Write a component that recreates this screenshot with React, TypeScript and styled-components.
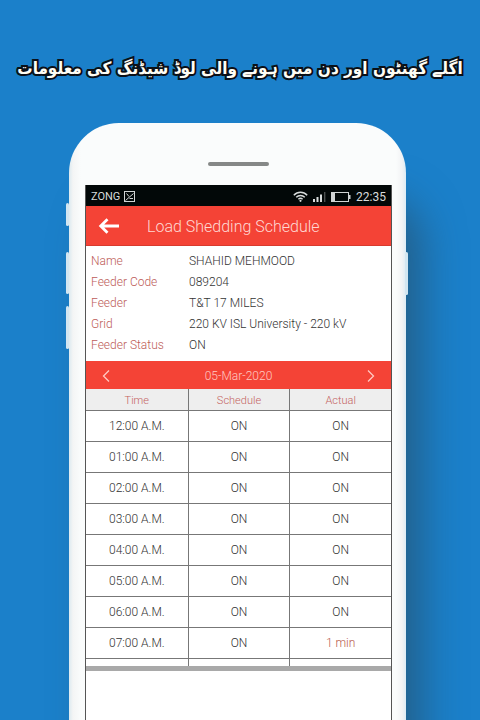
import React from "react";
import styled, { createGlobalStyle } from "styled-components";

const RED = "#f44336";

const GlobalStyle = createGlobalStyle`
  *, *::before, *::after { box-sizing: border-box; }
  body { margin: 0; background: #1b80ca; }
`;

const Page = styled.main`
  min-height: 100vh;
  display: flex;
  flex-direction: column;
  background: #1b80ca;
  overflow: hidden;
  font-family: Roboto, "Open Sans", sans-serif;
  font-weight: 300;
  color: #444;
`;

const Headline = styled.h1`
  margin: 0;
  padding: 48px 8px 0;
  height: 123px;
  text-align: center;
  white-space: nowrap;
  font-family: "DejaVu Sans Condensed", "DejaVu Sans", sans-serif;
  font-size: 17px;
  line-height: 40px;
  font-weight: 700;
  color: #fffdf5;
  -webkit-text-stroke: 4px #0a1018;
  paint-order: stroke fill;
`;

const Phone = styled.section`
  position: relative;
  flex: 1;
  display: flex;
  flex-direction: column;
  margin: 0 74px 0 69px;
  padding: 0 14px 0 16px;
  border-radius: 50px 50px 0 0;
  background: linear-gradient(90deg, #dceaf0, #f4f5f5 4px, #fafcfc 12px, #fafcfc calc(100% - 10px), #f2f3f5 calc(100% - 4px), #dcebf5);
  box-shadow: 20px 70px 40px -4px rgba(38, 84, 116, 0.75);
`;

const SideButton = styled.span<{ $side: "left" | "right"; $top: number; $height: number }>`
  position: absolute;
  ${(p) => p.$side}: ${(p) => (p.$side === "left" ? "-3px" : "-2px")};
  top: ${(p) => p.$top}px;
  width: 3px;
  height: ${(p) => p.$height}px;
  border-radius: 2px;
  background: #d3e6f1;
`;

const Earpiece = styled.div`
  height: 62px;
  display: flex;
  justify-content: center;
  padding-top: 39px;

  &::before {
    content: "";
    width: 61px;
    height: 4px;
    border-radius: 2px;
    background: #858887;
  }
`;

const Screen = styled.div`
  flex: 1;
  display: flex;
  flex-direction: column;
  border: solid #555;
  border-width: 0 1px;
  background: #fff;
`;

const StatusBar = styled.div`
  height: 21px;
  display: flex;
  align-items: center;
  gap: 4px;
  padding: 2px 5px 0;
  background: #020808;
  color: #d8dcdc;
  font-size: 12px;
  font-weight: 400;
`;

const Carrier = styled.span`
  font-size: 11px;
`;

const StatusIcons = styled.div`
  margin-left: auto;
  display: flex;
  align-items: center;
  gap: 5px;
`;

const AppBar = styled.header`
  height: 40px;
  display: flex;
  align-items: center;
  gap: 28px;
  padding: 0 12px;
  border-bottom: 1px solid #d83a2e;
  background: ${RED};
`;

const IconButton = styled.button`
  display: flex;
  align-items: center;
  justify-content: center;
  padding: 0;
  border: 0;
  background: transparent;
  color: inherit;
  cursor: pointer;
`;

const Title = styled.h2`
  margin: 0;
  padding-top: 2px;
  font-size: 16px;
  line-height: 24px;
  font-weight: 300;
  color: #ffd8d3;
`;

const Details = styled.dl`
  margin: 0;
  padding: 5px 5px 4px;
  display: grid;
  grid-template-columns: 98px 1fr;
  grid-auto-rows: 21px;
  align-content: start;
  height: 115px;
  font-size: 12px;
  line-height: 21px;
`;

const Term = styled.dt`
  color: #bd5c58;
`;

const Value = styled.dd`
  margin: 0;
  color: #333;
  white-space: nowrap;
`;

const DateBar = styled.nav`
  height: 28px;
  display: flex;
  align-items: center;
  justify-content: space-between;
  padding: 2px 14px 0;
  background: ${RED};
  color: #ffc9c2;
  font-size: 12px;
`;

const Schedule = styled.table`
  width: 100%;
  table-layout: fixed;
  border-collapse: separate;
  border-spacing: 0;
  border-bottom: 5px solid #a9a9a9;
  text-align: center;
`;

const HeadCell = styled.th`
  height: 22px;
  padding: 2px 0 0;
  border-bottom: 1px solid #777;
  background: #eee;
  color: #c4635e;
  font-size: 11px;
  line-height: 16px;
  font-weight: 300;

  & + & { border-left: 1px solid #777; }
`;

const Cell = styled.td<{ $alert?: boolean }>`
  height: 31px;
  padding: 0;
  border-bottom: 1px solid #777;
  color: ${(p) => (p.$alert ? "#b9604f" : "#333")};
  font-size: 12px;
  line-height: 16px;

  & + & { border-left: 1px solid #777; }
`;

const PeekCell = styled.td`
  height: 7px;
  padding: 0;

  & + & { border-left: 1px solid #777; }
`;

const details = [
  ["Name", "SHAHID MEHMOOD"],
  ["Feeder Code", "089204"],
  ["Feeder", "T&T 17 MILES"],
  ["Grid", "220 KV ISL University - 220 kV"],
  ["Feeder Status", "ON"],
];

const rows = [
  { time: "12:00 A.M.", schedule: "ON", actual: "ON" },
  { time: "01:00 A.M.", schedule: "ON", actual: "ON" },
  { time: "02:00 A.M.", schedule: "ON", actual: "ON" },
  { time: "03:00 A.M.", schedule: "ON", actual: "ON" },
  { time: "04:00 A.M.", schedule: "ON", actual: "ON" },
  { time: "05:00 A.M.", schedule: "ON", actual: "ON" },
  { time: "06:00 A.M.", schedule: "ON", actual: "ON" },
  { time: "07:00 A.M.", schedule: "ON", actual: "1 min" },
];

const PictureIcon = () => (
  <svg width="11" height="11" viewBox="0 0 11 11" fill="none" stroke="#d0d4d4" aria-hidden="true">
    <rect x="0.5" y="0.5" width="10" height="10" />
    <path d="M1.5 9.5 9.5 2.5M2.5 2.5 5 5.5M5.5 7.5h3.5" />
  </svg>
);

const WifiIcon = () => (
  <svg width="15" height="11" viewBox="0 0 15 11" fill="none" stroke="#d8dcdc" strokeWidth="1.4" aria-hidden="true">
    <path d="M.8 4.2C4.6.2 10.4.2 14.2 4.2M3.2 6.3c2.5-2.5 6.1-2.5 8.6 0M5.4 8.3c1.3-1.2 2.9-1.2 4.2 0" />
    <circle cx="7.5" cy="9.8" r="1.1" fill="#d8dcdc" stroke="none" />
  </svg>
);

const SignalIcon = () => (
  <svg width="13" height="10" viewBox="0 0 13 10" fill="#d8dcdc" aria-hidden="true">
    <rect x="0" y="7" width="2" height="3" />
    <rect x="3.5" y="5" width="2" height="5" />
    <rect x="7" y="2.5" width="2" height="7.5" />
    <rect x="11" y="0" width="1.4" height="10" fill="#4b5050" />
  </svg>
);

const BatteryIcon = () => (
  <svg width="20" height="10" viewBox="0 0 20 10" fill="none" stroke="#d0d4d4" aria-hidden="true">
    <rect x="0.5" y="0.5" width="17" height="9" />
    <path d="M18.7 3v4" strokeWidth="1.6" />
    <path d="M2.5 1v8" strokeWidth="3" />
  </svg>
);

const BackIcon = () => (
  <svg width="21" height="16" viewBox="0 0 21 16" fill="none" stroke="#fff" strokeWidth="2.8" aria-hidden="true">
    <path d="M21 8H3M9.5 1.2 2.7 8l6.8 6.8" />
  </svg>
);

const Chevron = ({ d }: { d: string }) => (
  <svg width="12" height="14" viewBox="0 0 12 14" fill="none" stroke="currentColor" strokeWidth="1.3" aria-hidden="true">
    <path d={d} />
  </svg>
);

export default function App() {
  return (
    <Page>
      <GlobalStyle />
      <Headline lang="ur" dir="rtl">اگلے گھنٹوں اور دن میں ہونے والی لوڈ شیڈنگ کی معلومات</Headline>
      <Phone>
        <SideButton $side="left" $top={80} $height={23} />
        <SideButton $side="left" $top={129} $height={42} />
        <SideButton $side="left" $top={183} $height={43} />
        <SideButton $side="right" $top={129} $height={43} />
        <Earpiece />
        <Screen>
          <StatusBar>
            <Carrier>ZONG</Carrier>
            <PictureIcon />
            <StatusIcons>
              <WifiIcon />
              <SignalIcon />
              <BatteryIcon />
              <span>22:35</span>
            </StatusIcons>
          </StatusBar>
          <AppBar>
            <IconButton type="button" aria-label="Back"><BackIcon /></IconButton>
            <Title>Load Shedding Schedule</Title>
          </AppBar>
          <Details>
            {details.map(([term, value]) => (
              <React.Fragment key={term}>
                <Term>{term}</Term>
                <Value>{value}</Value>
              </React.Fragment>
            ))}
          </Details>
          <DateBar aria-label="Schedule date">
            <IconButton type="button" aria-label="Previous day"><Chevron d="M9 1.5 3.5 7 9 12.5" /></IconButton>
            <span>05-Mar-2020</span>
            <IconButton type="button" aria-label="Next day"><Chevron d="M3 1.5 8.5 7 3 12.5" /></IconButton>
          </DateBar>
          <Schedule>
            <thead>
              <tr>
                <HeadCell scope="col">Time</HeadCell>
                <HeadCell scope="col">Schedule</HeadCell>
                <HeadCell scope="col">Actual</HeadCell>
              </tr>
            </thead>
            <tbody>
              {rows.map((row) => (
                <tr key={row.time}>
                  <Cell>{row.time}</Cell>
                  <Cell>{row.schedule}</Cell>
                  <Cell $alert={row.actual !== "ON"}>{row.actual}</Cell>
                </tr>
              ))}
              <tr aria-hidden="true">
                <PeekCell />
                <PeekCell />
                <PeekCell />
              </tr>
            </tbody>
          </Schedule>
        </Screen>
      </Phone>
    </Page>
  );
}
